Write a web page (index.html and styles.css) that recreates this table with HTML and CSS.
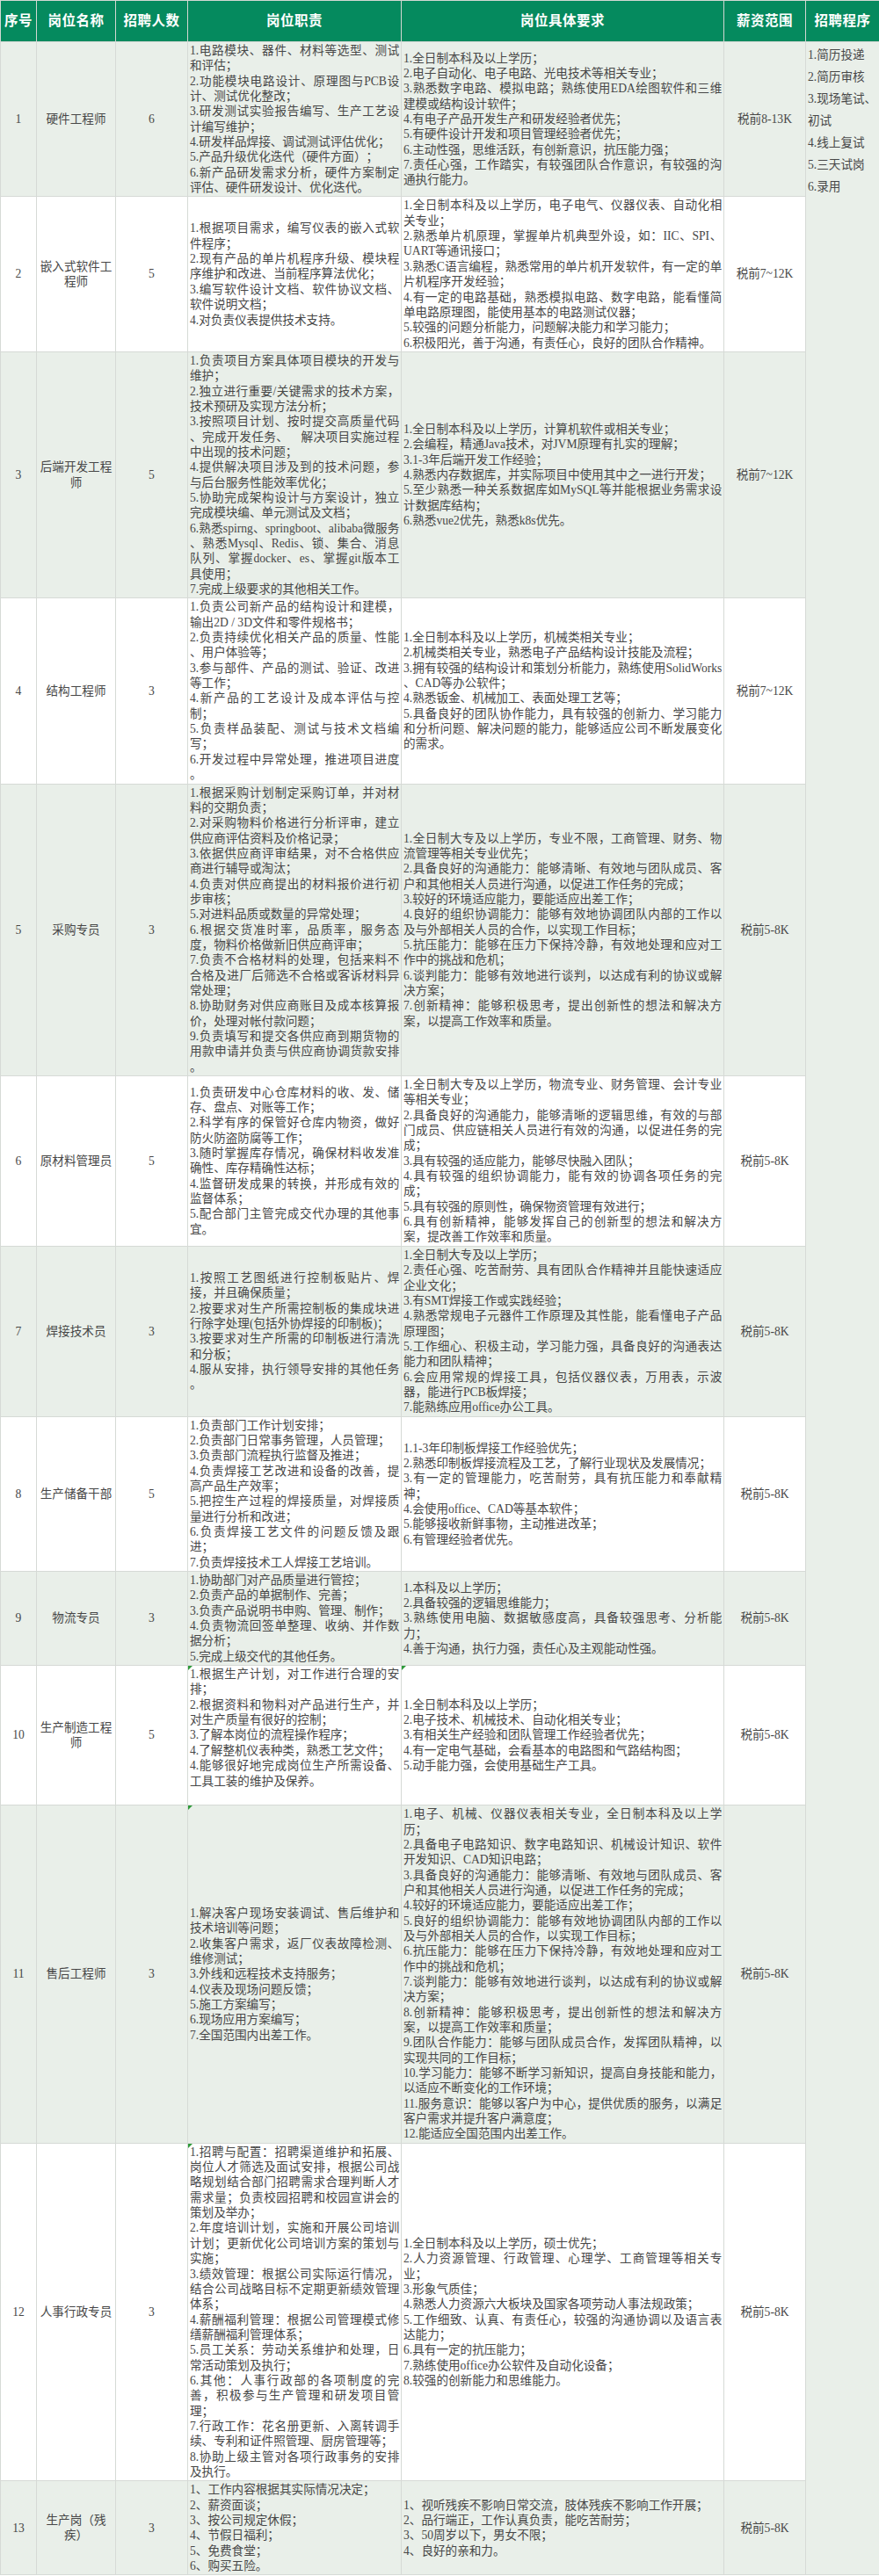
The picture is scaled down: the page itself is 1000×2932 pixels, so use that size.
FILE: index.html
```html
<!DOCTYPE html>
<html lang="zh-CN">
<head>
<meta charset="utf-8">
<title>招聘岗位</title>
<link rel="stylesheet" href="styles.css">
</head>
<body>
<table class="jobs">
<colgroup>
<col class="w-no"><col class="w-name"><col class="w-num"><col class="w-duty"><col class="w-req"><col class="w-pay"><col class="w-proc">
</colgroup>
<thead>
<tr>
<th>序号</th><th>岗位名称</th><th>招聘人数</th><th>岗位职责</th><th>岗位具体要求</th><th>薪资范围</th><th>招聘程序</th>
</tr>
</thead>
<tbody>
<tr class="alt">
<td class="c">1</td><td class="c name">硬件工程师</td><td class="c">6</td>
<td class="duty"><div class="txt">
<p>1.电路模块、器件、材料等选型、测试和评估；</p>
<p>2.功能模块电路设计、原理图与PCB设计、测试优化整改；</p>
<p>3.研发测试实验报告编写、生产工艺设计编写维护；</p>
<p>4.研发样品焊接、调试测试评估优化；</p>
<p>5.产品升级优化迭代（硬件方面）；</p>
<p>6.新产品研发需求分析，硬件方案制定评估、硬件研发设计、优化迭代。</p>
</div></td>
<td class="req"><div class="txt">
<p>1.全日制本科及以上学历；</p>
<p>2.电子自动化、电子电路、光电技术等相关专业；</p>
<p>3.熟悉数字电路、模拟电路；熟练使用EDA绘图软件和三维建模或结构设计软件；</p>
<p>4.有电子产品开发生产和研发经验者优先；</p>
<p>5.有硬件设计开发和项目管理经验者优先；</p>
<p>6.主动性强，思维活跃，有创新意识，抗压能力强；</p>
<p>7.责任心强，工作踏实，有较强团队合作意识，有较强的沟通执行能力。</p>
</div></td>
<td class="pay">税前8-13K</td>
<td class="proc" rowspan="13">
<p>1.简历投递</p>
<p>2.简历审核</p>
<p>3.现场笔试、初试</p>
<p>4.线上复试</p>
<p>5.三天试岗</p>
<p>6.录用</p>
</td>
</tr>
<tr>
<td class="c">2</td><td class="c name">嵌入式软件工程师</td><td class="c">5</td>
<td class="duty"><div class="txt">
<p>1.根据项目需求，编写仪表的嵌入式软件程序；</p>
<p>2.现有产品的单片机程序升级、模块程序维护和改进、当前程序算法优化；</p>
<p>3.编写软件设计文档、软件协议文档、软件说明文档；</p>
<p>4.对负责仪表提供技术支持。</p>
</div></td>
<td class="req"><div class="txt">
<p>1.全日制本科及以上学历，电子电气、仪器仪表、自动化相关专业；</p>
<p>2.熟悉单片机原理，掌握单片机典型外设，如：IIC、SPI、UART等通讯接口；</p>
<p>3.熟悉C语言编程，熟悉常用的单片机开发软件，有一定的单片机程序开发经验；</p>
<p>4.有一定的电路基础，熟悉模拟电路、数字电路，能看懂简单电路原理图，能使用基本的电路测试仪器；</p>
<p>5.较强的问题分析能力，问题解决能力和学习能力；</p>
<p>6.积极阳光，善于沟通，有责任心，良好的团队合作精神。</p>
</div></td>
<td class="pay">税前7~12K</td>
</tr>
<tr class="alt">
<td class="c">3</td><td class="c name">后端开发工程师</td><td class="c">5</td>
<td class="duty"><div class="txt">
<p>1.负责项目方案具体项目模块的开发与维护；</p>
<p>2.独立进行重要/关键需求的技术方案，技术预研及实现方法分析；</p>
<p>3.按照项目计划、按时提交高质量代码&#8203;、完成开发任务、　解决项目实施过程中出现的技术问题；</p>
<p>4.提供解决项目涉及到的技术问题，参与后台服务性能效率优化；</p>
<p>5.协助完成架构设计与方案设计，独立完成模块编、单元测试及文档；</p>
<p>6.熟悉spirng、springboot、alibaba微服务&#8203;、熟悉Mysql、Redis、锁、集合、消息队列、掌握docker、es、掌握git版本工具使用；</p>
<p>7.完成上级要求的其他相关工作。</p>
</div></td>
<td class="req"><div class="txt">
<p>1.全日制本科及以上学历，计算机软件或相关专业；</p>
<p>2.会编程，精通Java技术，对JVM原理有扎实的理解；</p>
<p>3.1-3年后端开发工作经验；</p>
<p>4.熟悉内存数据库，并实际项目中使用其中之一进行开发；</p>
<p>5.至少熟悉一种关系数据库如MySQL等并能根据业务需求设计数据库结构；</p>
<p>6.熟悉vue2优先，熟悉k8s优先。</p>
</div></td>
<td class="pay">税前7~12K</td>
</tr>
<tr>
<td class="c">4</td><td class="c name">结构工程师</td><td class="c">3</td>
<td class="duty"><div class="txt">
<p>1.负责公司新产品的结构设计和建模，输出2D / 3D文件和零件规格书；</p>
<p>2.负责持续优化相关产品的质量、性能&#8203;、用户体验等；</p>
<p>3.参与部件、产品的测试、验证、改进等工作；</p>
<p>4.新产品的工艺设计及成本评估与控制；</p>
<p>5.负责样品装配、测试与技术文档编写；</p>
<p>6.开发过程中异常处理，推进项目进度&#8203;。</p>
</div></td>
<td class="req"><div class="txt">
<p>1.全日制本科及以上学历，机械类相关专业；</p>
<p>2.机械类相关专业，熟悉电子产品结构设计技能及流程；</p>
<p>3.拥有较强的结构设计和策划分析能力，熟练使用SolidWorks&#8203;、CAD等办公软件；</p>
<p>4.熟悉钣金、机械加工、表面处理工艺等；</p>
<p>5.具备良好的团队协作能力，具有较强的创新力、学习能力和分析问题、解决问题的能力，能够适应公司不断发展变化的需求。</p>
</div></td>
<td class="pay">税前7~12K</td>
</tr>
<tr class="alt">
<td class="c">5</td><td class="c name">采购专员</td><td class="c">3</td>
<td class="duty"><div class="txt">
<p>1.根据采购计划制定采购订单，并对材料的交期负责；</p>
<p>2.对采购物料价格进行分析评审，建立供应商评估资料及价格记录；</p>
<p>3.依据供应商评审结果，对不合格供应商进行辅导或淘汰；</p>
<p>4.负责对供应商提出的材料报价进行初步审核；</p>
<p>5.对进料品质或数量的异常处理；</p>
<p>6.根据交货准时率，品质率，服务态度，物料价格做新旧供应商评审；</p>
<p>7.负责不合格材料的处理，包括来料不合格及进厂后筛选不合格或客诉材料异常处理；</p>
<p>8.协助财务对供应商账目及成本核算报价，处理对帐付款问题；</p>
<p>9.负责填写和提交各供应商到期货物的用款申请并负责与供应商协调货款安排&#8203;。</p>
</div></td>
<td class="req"><div class="txt">
<p>1.全日制大专及以上学历，专业不限，工商管理、财务、物流管理等相关专业优先；</p>
<p>2.具备良好的沟通能力：能够清晰、有效地与团队成员、客户和其他相关人员进行沟通，以促进工作任务的完成；</p>
<p>3.较好的环境适应能力，要能适应出差工作；</p>
<p>4.良好的组织协调能力：能够有效地协调团队内部的工作以及与外部相关人员的合作，以实现工作目标；</p>
<p>5.抗压能力：能够在压力下保持冷静，有效地处理和应对工作中的挑战和危机；</p>
<p>6.谈判能力：能够有效地进行谈判，以达成有利的协议或解决方案；</p>
<p>7.创新精神：能够积极思考，提出创新性的想法和解决方案，以提高工作效率和质量。</p>
</div></td>
<td class="pay">税前5-8K</td>
</tr>
<tr>
<td class="c">6</td><td class="c name">原材料管理员</td><td class="c">5</td>
<td class="duty"><div class="txt">
<p>1.负责研发中心仓库材料的收、发、储存、盘点、对账等工作；</p>
<p>2.科学有序的保管好仓库内物资，做好防火防盗防腐等工作；</p>
<p>3.随时掌握库存情况，确保材料收发准确性、库存精确性达标；</p>
<p>4.监督研发成果的转换，并形成有效的监督体系；</p>
<p>5.配合部门主管完成交代办理的其他事宜。</p>
</div></td>
<td class="req"><div class="txt">
<p>1.全日制大专及以上学历，物流专业、财务管理、会计专业等相关专业；</p>
<p>2.具备良好的沟通能力，能够清晰的逻辑思维，有效的与部门成员、供应链相关人员进行有效的沟通，以促进任务的完成；</p>
<p>3.具有较强的适应能力，能够尽快融入团队；</p>
<p>4.具有较强的组织协调能力，能有效的协调各项任务的完成；</p>
<p>5.具有较强的原则性，确保物资管理有效进行；</p>
<p>6.具有创新精神，能够发挥自己的创新型的想法和解决方案，提改善工作效率和质量。</p>
</div></td>
<td class="pay">税前5-8K</td>
</tr>
<tr class="alt">
<td class="c">7</td><td class="c name">焊接技术员</td><td class="c">3</td>
<td class="duty"><div class="txt">
<p>1.按照工艺图纸进行控制板贴片、焊接，并且确保质量；</p>
<p>2.按要求对生产所需控制板的集成块进行除字处理(包括外协焊接的印制板)；</p>
<p>3.按要求对生产所需的印制板进行清洗和分板；</p>
<p>4.服从安排，执行领导安排的其他任务&#8203;。</p>
</div></td>
<td class="req"><div class="txt">
<p>1.全日制大专及以上学历；</p>
<p>2.责任心强、吃苦耐劳、具有团队合作精神并且能快速适应企业文化；</p>
<p>3.有SMT焊接工作或实践经验；</p>
<p>4.熟悉常规电子元器件工作原理及其性能，能看懂电子产品原理图；</p>
<p>5.工作细心、积极主动，学习能力强，具备良好的沟通表达能力和团队精神；</p>
<p>6.会应用常规的焊接工具，包括仪器仪表，万用表，示波器，能进行PCB板焊接；</p>
<p>7.能熟练应用office办公工具。</p>
</div></td>
<td class="pay">税前5-8K</td>
</tr>
<tr>
<td class="c">8</td><td class="c name">生产储备干部</td><td class="c">5</td>
<td class="duty"><div class="txt">
<p>1.负责部门工作计划安排；</p>
<p>2.负责部门日常事务管理，人员管理；</p>
<p>3.负责部门流程执行监督及推进；</p>
<p>4.负责焊接工艺改进和设备的改善，提高产品生产效率；</p>
<p>5.把控生产过程的焊接质量，对焊接质量进行分析和改进；</p>
<p>6.负责焊接工艺文件的问题反馈及跟进；</p>
<p>7.负责焊接技术工人焊接工艺培训。</p>
</div></td>
<td class="req"><div class="txt">
<p>1.1-3年印制板焊接工作经验优先；</p>
<p>2.熟悉印制板焊接流程及工艺，了解行业现状及发展情况；</p>
<p>3.有一定的管理能力，吃苦耐劳，具有抗压能力和奉献精神；</p>
<p>4.会使用office、CAD等基本软件；</p>
<p>5.能够接收新鲜事物，主动推进改革；</p>
<p>6.有管理经验者优先。</p>
</div></td>
<td class="pay">税前5-8K</td>
</tr>
<tr class="alt">
<td class="c">9</td><td class="c name">物流专员</td><td class="c">3</td>
<td class="duty"><div class="txt">
<p>1.协助部门对产品质量进行管控；</p>
<p>2.负责产品的单据制作、完善；</p>
<p>3.负责产品说明书申购、管理、制作；</p>
<p>4.负责物流回签单整理、收纳、并作数据分析；</p>
<p>5.完成上级交代的其他任务。</p>
</div></td>
<td class="req"><div class="txt">
<p>1.本科及以上学历；</p>
<p>2.具备较强的逻辑思维能力；</p>
<p>3.熟练使用电脑、数据敏感度高，具备较强思考、分析能力；</p>
<p>4.善于沟通，执行力强，责任心及主观能动性强。</p>
</div></td>
<td class="pay">税前5-8K</td>
</tr>
<tr>
<td class="c">10</td><td class="c name">生产制造工程师</td><td class="c">5</td>
<td class="duty mark"><div class="txt">
<p>1.根据生产计划，对工作进行合理的安排；</p>
<p>2.根据资料和物料对产品进行生产，并对生产质量有很好的控制；</p>
<p>3.了解本岗位的流程操作程序；</p>
<p>4.了解整机仪表种类，熟悉工艺文件；</p>
<p>4.能够很好地完成岗位生产所需设备、工具工装的维护及保养。</p>
<p class="blank"></p>
</div></td>
<td class="req mark"><div class="txt">
<p>1.全日制本科及以上学历；</p>
<p>2.电子技术、机械技术、自动化相关专业；</p>
<p>3.有相关生产经验和团队管理工作经验者优先；</p>
<p>4.有一定电气基础，会看基本的电路图和气路结构图；</p>
<p>5.动手能力强，会使用基础生产工具。</p>
</div></td>
<td class="pay">税前5-8K</td>
</tr>
<tr class="alt">
<td class="c">11</td><td class="c name">售后工程师</td><td class="c">3</td>
<td class="duty mark"><div class="txt">
<p>1.解决客户现场安装调试、售后维护和技术培训等问题；</p>
<p>2.收集客户需求，返厂仪表故障检测、维修测试；</p>
<p>3.外线和远程技术支持服务；</p>
<p>4.仪表及现场问题反馈；</p>
<p>5.施工方案编写；</p>
<p>6.现场应用方案编写；</p>
<p>7.全国范围内出差工作。</p>
</div></td>
<td class="req"><div class="txt">
<p>1.电子、机械、仪器仪表相关专业，全日制本科及以上学历；</p>
<p>2.具备电子电路知识、数字电路知识、机械设计知识、软件开发知识、CAD知识电路；</p>
<p>3.具备良好的沟通能力：能够清晰、有效地与团队成员、客户和其他相关人员进行沟通，以促进工作任务的完成；</p>
<p>4.较好的环境适应能力，要能适应出差工作；</p>
<p>5.良好的组织协调能力：能够有效地协调团队内部的工作以及与外部相关人员的合作，以实现工作目标；</p>
<p>6.抗压能力：能够在压力下保持冷静，有效地处理和应对工作中的挑战和危机；</p>
<p>7.谈判能力：能够有效地进行谈判，以达成有利的协议或解决方案；</p>
<p>8.创新精神：能够积极思考，提出创新性的想法和解决方案，以提高工作效率和质量；</p>
<p>9.团队合作能力：能够与团队成员合作，发挥团队精神，以实现共同的工作目标；</p>
<p>10.学习能力：能够不断学习新知识，提高自身技能和能力，以适应不断变化的工作环境；</p>
<p>11.服务意识：能够以客户为中心，提供优质的服务，以满足客户需求并提升客户满意度；</p>
<p>12.能适应全国范围内出差工作。</p>
</div></td>
<td class="pay">税前5-8K</td>
</tr>
<tr>
<td class="c">12</td><td class="c name">人事行政专员</td><td class="c">3</td>
<td class="duty mark"><div class="txt">
<p>1.招聘与配置：招聘渠道维护和拓展、岗位人才筛选及面试安排，根据公司战略规划结合部门招聘需求合理判断人才需求量；负责校园招聘和校园宣讲会的策划及举办；</p>
<p>2.年度培训计划，实施和开展公司培训计划；更新优化公司培训方案的策划与实施；</p>
<p>3.绩效管理：根据公司实际运行情况，结合公司战略目标不定期更新绩效管理体系；</p>
<p>4.薪酬福利管理：根据公司管理模式修缮薪酬福利管理体系；</p>
<p>5.员工关系：劳动关系维护和处理，日常活动策划及执行；</p>
<p>6.其他：人事行政部的各项制度的完善，积极参与生产管理和研发项目管理；</p>
<p>7.行政工作：花名册更新、入离转调手续、专利和证件照管理、厨房管理等；</p>
<p>8.协助上级主管对各项行政事务的安排及执行。</p>
</div></td>
<td class="req"><div class="txt">
<p>1.全日制本科及以上学历，硕士优先；</p>
<p>2.人力资源管理、行政管理、心理学、工商管理等相关专业；</p>
<p>3.形象气质佳；</p>
<p>4.熟悉人力资源六大板块及国家各项劳动人事法规政策；</p>
<p>5.工作细致、认真、有责任心，较强的沟通协调以及语言表达能力；</p>
<p>6.具有一定的抗压能力；</p>
<p>7.熟练使用office办公软件及自动化设备；</p>
<p>8.较强的创新能力和思维能力。</p>
</div></td>
<td class="pay">税前5-8K</td>
</tr>
<tr class="alt">
<td class="c">13</td><td class="c name">生产岗（残疾）</td><td class="c">3</td>
<td class="duty"><div class="txt">
<p>1、工作内容根据其实际情况决定；</p>
<p>2、薪资面谈；</p>
<p>3、按公司规定休假；</p>
<p>4、节假日福利；</p>
<p>5、免费食堂；</p>
<p>6、购买五险。</p>
</div></td>
<td class="req"><div class="txt">
<p>1、视听残疾不影响日常交流，肢体残疾不影响工作开展；</p>
<p>2、品行端正，工作认真负责，能吃苦耐劳；</p>
<p>3、50周岁以下，男女不限；</p>
<p>4、良好的亲和力。</p>
</div></td>
<td class="pay">税前5-8K</td>
</tr>
</tbody>
</table>
</body>
</html>
```

FILE: styles.css
```css
html, body {
  margin: 0;
  padding: 0;
  background: #ffffff;
}

body {
  font-family: "Liberation Serif", "Noto Sans CJK SC", serif;
  color: #474747;
  font-size: 13.6px;
  line-height: 17.35px;
  text-spacing-trim: space-all;
}

.jobs {
  width: 1000px;
  border-collapse: collapse;
  table-layout: fixed;
  border-top: 1px solid #8a8a8a;
}

.w-no { width: 41px; }
.w-name { width: 90px; }
.w-num { width: 82px; }
.w-duty { width: 243px; }
.w-req { width: 367px; }
.w-pay { width: 93px; }
.w-proc { width: 84px; }

.jobs th {
  height: 46px;
  padding: 0;
  background: #058a5e;
  color: #ffffff;
  font-size: 15.5px;
  line-height: 22px;
  font-weight: bold;
  text-align: center;
  vertical-align: middle;
  border: 1px solid #d3d8d3;
  letter-spacing: 0.5px;
}

.jobs td {
  border: 1px solid #d6dad6;
  padding: 1px 2px;
  vertical-align: middle;
}

.jobs tr.alt td {
  background: #e9efe9;
}

.jobs td.proc {
  background: #ffffff;
  vertical-align: top;
  padding: 2px 2px;
  line-height: 25px;
  border-bottom: 1px solid #d6dad6;
}

.c {
  text-align: center;
}

.name {
  padding: 1px 4px;
}

.pay {
  text-align: center;
}

.txt {
  text-align: justify;
}

.duty .txt {
  width: 17.52em;
}

.req .txt {
  width: 26.64em;
}

.txt p,
.proc p {
  margin: 0;
}

.txt p.blank {
  height: 17.35px;
}

.mark {
  position: relative;
}

.mark::before {
  content: "";
  position: absolute;
  left: 0;
  top: 0;
  border-top: 5px solid #2e9a3a;
  border-right: 5px solid transparent;
}
```
